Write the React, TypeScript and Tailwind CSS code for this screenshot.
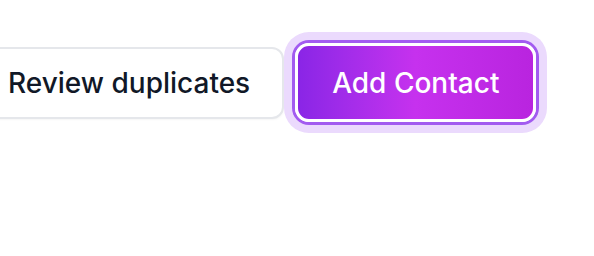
export default function App() {
  return (
    <div className="w-[594px] h-[256px] bg-white overflow-hidden font-['Inter',sans-serif]">
      {/* button row, left button runs off the left edge */}
      <div className="flex items-center gap-[11px] pt-[43px] -ml-[32px]">
        <button className="h-[72px] pl-[38px] pr-[32px] bg-white border-2 border-[#e5e7eb] rounded-[12px] text-[28px] font-medium text-[#111827] shadow-[0_1px_2px_rgba(0,0,0,0.04)]">
          Review duplicates
        </button>
        <button className="h-[79px] px-[34px] rounded-[14px] border-[3px] border-white text-white text-[28px] font-medium bg-gradient-to-r from-[#8a25e6] via-[#c631ee] to-[#b924df] shadow-[0_0_0_3px_#a25bf0,0_0_0_11px_#ebdafd]">
          Add Contact
        </button>
      </div>
    </div>
  );
}
